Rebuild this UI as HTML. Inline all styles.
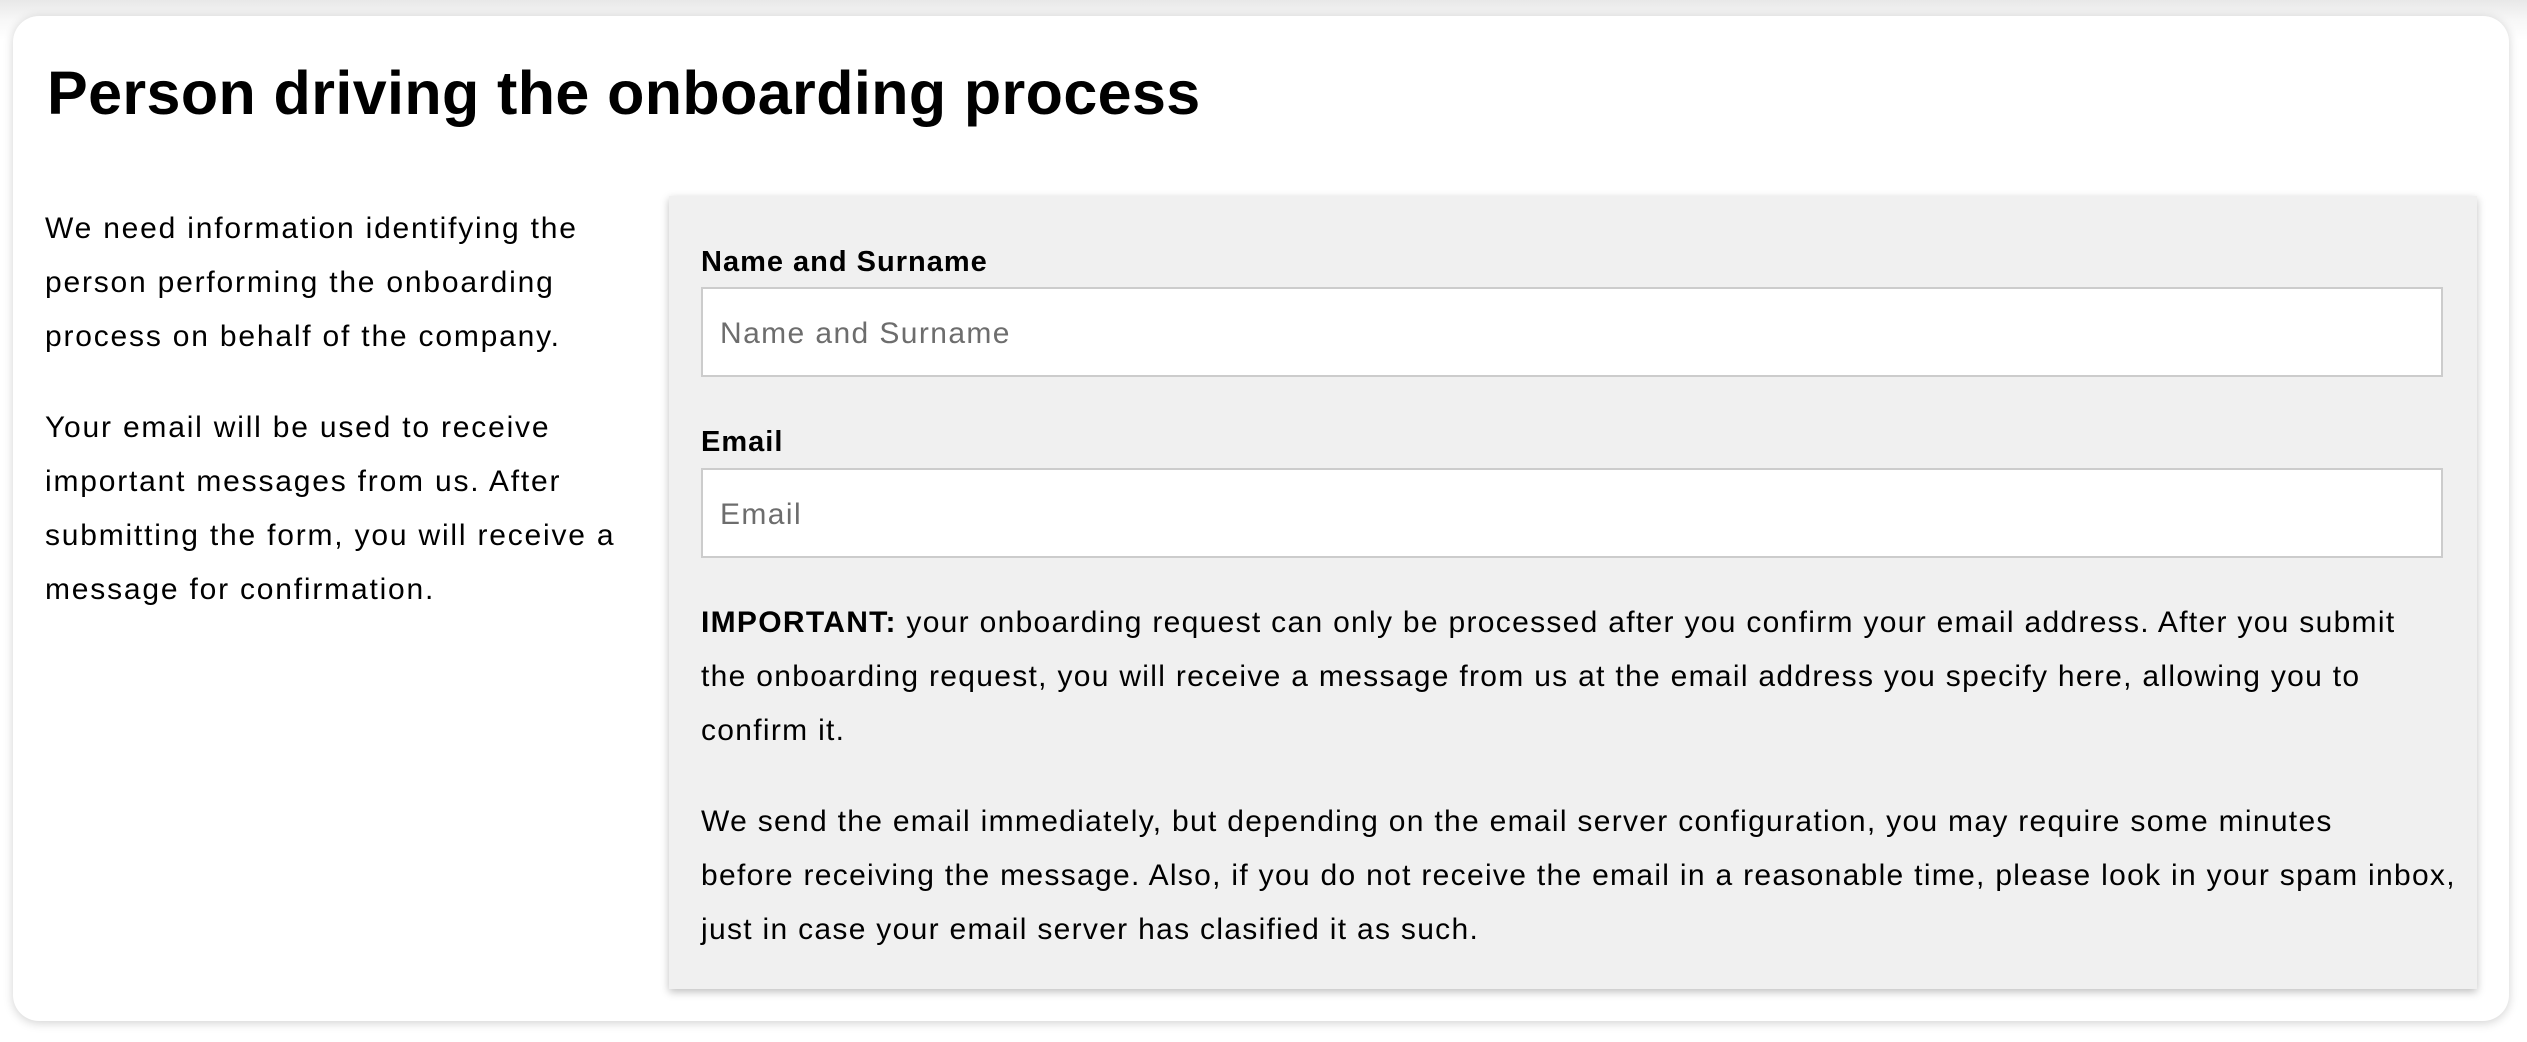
<!DOCTYPE html>
<html><head><style>
html,body{margin:0;padding:0;background:#fff;width:2527px;height:1042px;overflow:hidden;font-family:"Liberation Sans",sans-serif;color:#000}
body{background:linear-gradient(#e8e8e8,#f7f7f7 20px,#fff 40px)}
.card{position:absolute;left:13px;top:16px;width:2496px;height:1005px;background:#fff;border-radius:26px;box-shadow:0 2px 10px rgba(0,0,0,.18)}
h1{position:absolute;left:34px;top:37px;margin:0;font-size:61px;line-height:80px;font-weight:bold;letter-spacing:0.4px;white-space:nowrap}
.left{position:absolute;left:32px;top:186px;width:640px;font-size:30px;line-height:54px;letter-spacing:1.8px}
.left p{margin:0 0 37px}
.panel{position:absolute;left:656px;top:180px;width:1808px;height:793px;background:#f0f0f0;box-shadow:0 3px 8px rgba(0,0,0,.25)}
.lbl{position:absolute;left:32px;font-size:29px;font-weight:bold;letter-spacing:1px;line-height:40px}
.inp{position:absolute;left:32px;width:1739px;height:86px;background:#fff;border:2px solid #ccc;font-size:30px;color:#6d6d6d;line-height:90px;padding-left:17px;box-sizing:content-box;letter-spacing:1.4px}
.txt{position:absolute;left:32px;width:1780px;font-size:30px;line-height:54px;letter-spacing:1.3px;white-space:nowrap}
.txt p{margin:0 0 37px}
</style></head><body>
<div class="card">
<h1>Person driving the onboarding process</h1>
<div class="left">
<p>We need information identifying the<br>person performing the onboarding<br>process on behalf of the company.</p>
<p>Your email will be used to receive<br>important messages from us. After<br>submitting the form, you will receive a<br>message for confirmation.</p>
</div>
<div class="panel">
<div class="lbl" style="top:46px">Name and Surname</div>
<div class="inp" style="top:91px;width:1721px">Name and Surname</div>
<div class="lbl" style="top:226px">Email</div>
<div class="inp" style="top:272px;width:1721px">Email</div>
<div class="txt" style="top:400px">
<p><b>IMPORTANT:</b> your onboarding request can only be processed after you confirm your email address. After you submit<br>the onboarding request, you will receive a message from us at the email address you specify here, allowing you to<br>confirm it.</p>
<p>We send the email immediately, but depending on the email server configuration, you may require some minutes<br>before receiving the message. Also, if you do not receive the email in a reasonable time, please look in your spam inbox,<br>just in case your email server has clasified it as such.</p>
</div>
</div>
</div>
</body></html>
